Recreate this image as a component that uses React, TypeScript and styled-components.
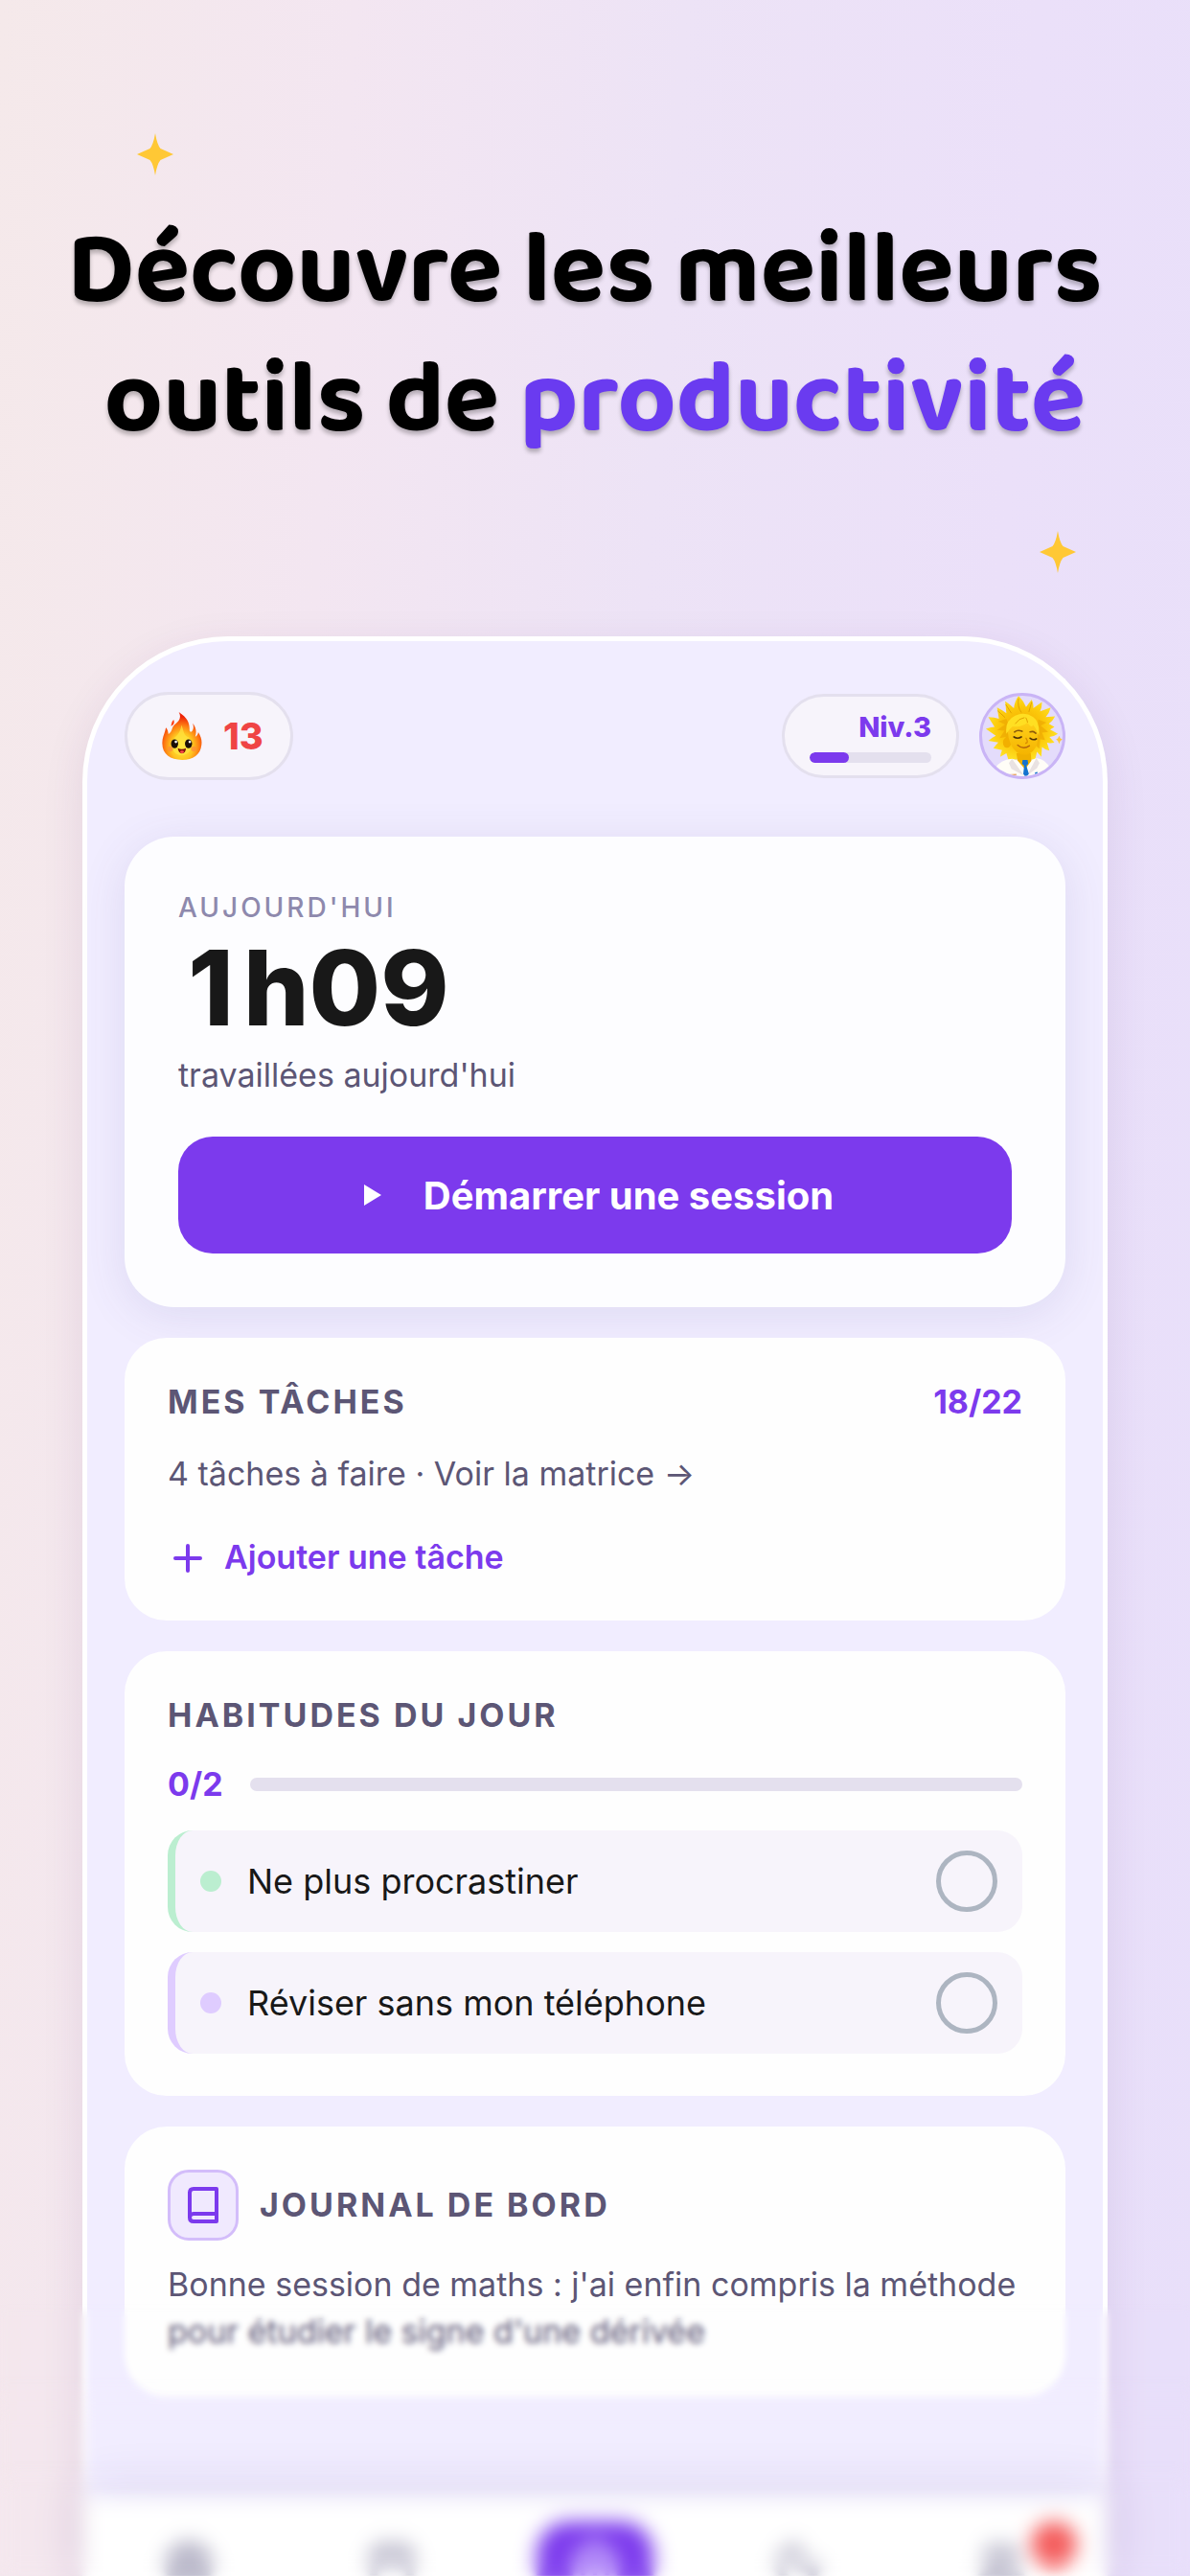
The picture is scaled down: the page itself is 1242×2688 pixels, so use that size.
import React from "react";
import styled, { createGlobalStyle, css } from "styled-components";
import { Calendar, House, Moon, Target, Users } from "lucide-react";

const color = {
  violet: "#7c3aed",
  ink: "#181818",
  text: "#5c5675",
  muted: "#8e89ad",
  track: "#e4e0ee",
  soft: "#f7f4fb",
  screen: "#f1edff",
  card: "#fefefe",
};

const GlobalStyle = createGlobalStyle`
  *, *::before, *::after { box-sizing: border-box; }
  body { margin: 0; }
  button, input { font: inherit; }
  h1, h2, p, ul { margin: 0; padding: 0; }
`;

const Page = styled.main`
  position: relative;
  display: flex;
  flex-direction: column;
  min-height: 100vh;
  overflow: hidden;
  font-family: Inter, "Liberation Sans", sans-serif;
  color: ${color.ink};
  background: linear-gradient(94deg, #f5e9ea 0%, #f3e6f1 26%, #ede3f6 50%, #ebe0f9 76%, #e8dffa 100%);
`;

const Hero = styled.header`
  display: flex;
  flex-direction: column;
  padding: 139px 119px 66px 143px;
`;

const Sparkle = styled.svg<{ $end?: boolean }>`
  width: 38px;
  height: 44px;
  fill: #ffc835;
  align-self: ${(p) => (p.$end ? "flex-end" : "flex-start")};
`;

const Headline = styled.h1`
  margin: 34px -119px 67px -143px;
  font-family: "Baloo 2", Lato, sans-serif;
  font-size: 106px;
  font-weight: 700;
  line-height: 135px;
  text-align: center;
  white-space: pre;
  color: #000;
  text-shadow: 0 4px 4px rgba(0, 0, 0, 0.25);
`;

const Accent = styled.span`
  color: #6a3bf0;
`;

const Phone = styled.section`
  flex: 1;
  display: flex;
  flex-direction: column;
  margin: 0 86px;
  border: 5px solid #fff;
  border-bottom: 0;
  border-radius: 152px 152px 0 0;
  background: ${color.screen};
  box-shadow: 0 12px 44px rgba(90, 40, 110, 0.1);
`;

const Screen = styled.div`
  display: flex;
  flex-direction: column;
  gap: 32px;
  padding: 53px 39px 106px;
`;

const TopBar = styled.div`
  display: flex;
  align-items: center;
  gap: 21px;
  margin-bottom: 27px;
`;

const pill = css`
  background: ${color.soft};
  border: 3px solid ${color.track};
  border-radius: 46px;
`;

const Streak = styled.div`
  ${pill}
  display: flex;
  align-items: center;
  gap: 22px;
  height: 92px;
  margin-right: auto;
  padding: 0 28px 0 36px;
  font-size: 38px;
  font-weight: 800;
  color: #ef4444;
`;

const Level = styled.div`
  ${pill}
  display: flex;
  flex-direction: column;
  justify-content: center;
  gap: 8px;
  width: 185px;
  height: 88px;
  padding: 0 26px;
  font-size: 29px;
  font-weight: 800;
  line-height: 36px;
  text-align: right;
  color: ${color.violet};
`;

const Track = styled.div<{ $size: number }>`
  flex: ${(p) => (p.$size > 12 ? "1" : "none")};
  height: ${(p) => p.$size}px;
  border-radius: 8px;
  background: ${color.track};
  overflow: hidden;
`;

const Fill = styled.div`
  height: 100%;
  border-radius: 8px;
  background: ${color.violet};
`;

const Avatar = styled.button`
  width: 90px;
  height: 90px;
  padding: 0;
  border: 3px solid #c9b4f6;
  border-radius: 50%;
  background: #e4dcfb;
  overflow: hidden;

  svg {
    display: block;
    width: 100%;
    height: 100%;
  }
`;

const Card = styled.section`
  padding: 45px 45px 44px;
  border-radius: 44px;
  background: ${color.card};
`;

const TodayCard = styled(Card)`
  display: flex;
  flex-direction: column;
  gap: 8px;
  padding: 56px;
  border-radius: 52px;
  background: #fdfdff;
  box-shadow: 0 8px 48px rgba(80, 70, 150, 0.12);
`;

const Eyebrow = styled.h2`
  font-size: 28px;
  font-weight: 500;
  line-height: 36px;
  letter-spacing: 3px;
  color: ${color.muted};
`;

const Total = styled.p`
  font-size: 108px;
  font-weight: 800;
  line-height: 116px;
`;

/* Gives the narrow "1" nearly the same advance as the other digits. */
const Digit = styled.span`
  display: inline-block;
  width: 68px;
  text-align: center;
`;

const Body = styled.p`
  font-size: 34px;
  line-height: 49px;
  color: ${color.text};
`;

const StartButton = styled.button`
  display: flex;
  align-items: center;
  justify-content: center;
  gap: 44px;
  height: 122px;
  margin-top: 32px;
  padding: 0 0 0 8px;
  border: 0;
  border-radius: 36px;
  background: ${color.violet};
  color: #fff;
  font-size: 40px;
  font-weight: 700;
`;

const Row = styled.div<{ $gap?: number }>`
  display: flex;
  align-items: center;
  gap: ${(p) => p.$gap ?? 0}px;
`;

const CardTitle = styled.h2`
  font-size: 34px;
  font-weight: 700;
  line-height: 44px;
  letter-spacing: 3px;
  color: ${color.text};
`;

const Count = styled.span`
  font-size: 34px;
  font-weight: 700;
  line-height: 44px;
  color: ${color.violet};
`;

const TaskTitleRow = styled(Row)`
  justify-content: space-between;
`;

const MatrixLink = styled.a`
  display: block;
  margin: 28px 0 41px;
  font-size: 34px;
  line-height: 49px;
  color: ${color.text};
  text-decoration: none;
`;

const AddButton = styled.button`
  display: flex;
  align-items: center;
  gap: 19px;
  padding: 0;
  border: 0;
  background: none;
  font-size: 34px;
  font-weight: 600;
  line-height: 44px;
  color: ${color.violet};
`;

const HabitProgress = styled(Row)`
  margin: 28px 0 26px;
`;

const HabitList = styled.ul`
  display: flex;
  flex-direction: column;
  gap: 21px;
  list-style: none;
`;

const HabitItem = styled.li<{ $tint: string }>`
  border-left: 8px solid ${(p) => p.$tint};
  border-radius: 26px;
  background: ${color.soft};

  label {
    display: flex;
    align-items: center;
    gap: 27px;
    height: 106px;
    padding: 0 26px;
    font-size: 36px;
  }

  label::before {
    content: "";
    width: 22px;
    height: 22px;
    border-radius: 50%;
    background: ${(p) => p.$tint};
  }
`;

const Check = styled.input`
  appearance: none;
  width: 64px;
  height: 64px;
  margin: 0 0 0 auto;
  border: 5px solid #adb5c1;
  border-radius: 50%;

  &:checked {
    background: ${color.violet};
    border-color: ${color.violet};
  }
`;

const JournalIcon = styled.span`
  display: grid;
  place-items: center;
  width: 74px;
  height: 74px;
  border: 3px solid #d3bdfa;
  border-radius: 22px;
  background: #f0e9fe;
`;

const JournalHead = styled(Row)`
  margin-bottom: 21px;
`;

const TabDock = styled.div`
  flex: 1;
  background: #fff;
  box-shadow: 0 -8px 56px rgba(70, 50, 120, 0.12);
`;

const TabBar = styled.nav`
  display: grid;
  grid-template-columns: repeat(5, 1fr);
  height: 80px;
  overflow: hidden;
`;

const Tab = styled.button<{ $active?: boolean }>`
  position: relative;
  justify-self: center;
  display: flex;
  justify-content: center;
  width: 122px;
  height: 112px;
  margin-top: 24px;
  padding: 20px 0 0;
  border: 0;
  border-radius: 34px;
  background: ${(p) => (p.$active ? color.violet : "transparent")};
  color: ${(p) => (p.$active ? "#d9c4ff" : "#b9b7c9")};
`;

const Badge = styled.span`
  position: absolute;
  top: 0;
  right: -18px;
  width: 48px;
  height: 48px;
  border-radius: 50%;
  background: #f45b5b;
`;

/* Soft-focus veil over the foot of the page; each layer starts lower and blurs more. */
const Veil = styled.div<{ $height: number; $blur: number; $fade: number }>`
  position: absolute;
  left: 0;
  right: 0;
  bottom: 0;
  height: ${(p) => p.$height}px;
  pointer-events: none;
  backdrop-filter: blur(${(p) => p.$blur}px);
  mask-image: linear-gradient(to bottom, transparent, #000 ${(p) => p.$fade}px);
`;

const StarIcon = ({ end }: { end?: boolean }) => (
  <Sparkle $end={end} viewBox="0 0 38 44" aria-hidden="true">
    <path d="M19 0Q21 12 24.500 16L38 22L24.500 28Q21 32 19 44Q17 32 13.500 28L0 22L13.500 16Q17 12 19 0Z" />
  </Sparkle>
);

const PlayIcon = () => (
  <svg width="18" height="24" viewBox="0 0 18 24" fill="#fff" aria-hidden="true">
    <path d="M0 1L18 12L0 23Z" />
  </svg>
);

const PlusIcon = () => (
  <svg width="40" height="40" viewBox="0 0 40 40" stroke={color.violet} strokeWidth="4" strokeLinecap="round" aria-hidden="true">
    <path d="M21 8V34M8 21H34" />
  </svg>
);

const FlameIcon = () => (
  <svg width="42" height="50" viewBox="0 0 124 148" aria-hidden="true">
    <defs>
      <radialGradient id="flame" cx="0.5" cy="0.72" r="0.62">
        <stop offset="0" stopColor="#ffe93c" />
        <stop offset="0.45" stopColor="#ffc41f" />
        <stop offset="0.72" stopColor="#fd7a12" />
        <stop offset="1" stopColor="#ee2408" />
      </radialGradient>
    </defs>
    <path
      fill="url(#flame)"
      d="M52 0C80 18 86 36 85 56C86 62 91 63 94 58C98 51 98 43 95 35C106 48 107 62 103 76C108 74 111 69 112 62C121 76 124 88 122 102C119 132 96 148 62 148C26 148 1 130 1 98C0 78 9 66 12 48C18 54 19 62 20 68C34 58 29 48 38 40C54 28 61 18 52 0Z"
    />
    <path fill="#ff3d12" d="M36 24C40 34 36 40 28 44C30 36 29 32 36 24Z" />
    <path fill="#ffe640" opacity="0.7" d="M60 40C68 58 66 72 82 78C98 92 96 130 62 134C28 132 24 98 40 78C50 70 58 58 60 40Z" />
    <ellipse cx="39" cy="98" rx="11" ry="14" fill="#1a0e08" />
    <ellipse cx="82" cy="98" rx="11" ry="14" fill="#1a0e08" />
    <circle cx="43" cy="92" r="4" fill="#fff" />
    <circle cx="86" cy="92" r="4" fill="#fff" />
    <circle cx="26" cy="114" r="8" fill="#ff8a3c" opacity="0.7" />
    <circle cx="98" cy="114" r="8" fill="#ff8a3c" opacity="0.7" />
    <path fill="#7a1208" d="M49 112Q61 118 74 112Q73 128 62 128Q51 128 49 112Z" />
    <ellipse cx="62" cy="123" rx="6" ry="4" fill="#ff4a4a" />
  </svg>
);

const AvatarArt = () => (
  <svg viewBox="6 6 258 258" aria-hidden="true">
    <defs>
      <radialGradient id="hair" cx="0.5" cy="0.5" r="0.55">
        <stop offset="0" stopColor="#f0a800" />
        <stop offset="0.6" stopColor="#fcc90b" />
        <stop offset="1" stopColor="#ffe52a" />
      </radialGradient>
      <linearGradient id="skin" x1="0" y1="0" x2="0" y2="1">
        <stop offset="0" stopColor="#ffd21c" />
        <stop offset="1" stopColor="#f5b400" />
      </linearGradient>
    </defs>
    <path
      fill="url(#hair)"
      d="M123 6Q140 24 147 42L165 18Q172 34 170 46L198 26Q198 44 192 56L226 44Q222 62 210 74L240 72Q232 88 220 96L238 106L224 114L249 128Q234 138 222 138L238 156Q222 160 214 156L222 182Q206 178 198 170L196 202L182 186L176 210L90 210L84 190L64 202Q66 188 70 180L42 174Q52 162 58 156L26 150Q40 138 50 134L18 112Q36 106 46 106L26 74Q46 74 60 80L54 44Q74 54 84 62L80 24Q98 36 108 46Q110 24 123 6Z"
    />
    <path fill="#e9a100" opacity="0.55" d="M84 80L58 88L80 98L54 116L78 118L62 142L82 138L78 170L94 160L92 100ZM186 82L212 92L194 102L218 122L198 124L208 148L192 146L190 176L180 168Z" />
    <path fill="#fffdf7" d="M48 238Q64 212 102 208L142 222L180 206Q212 210 224 240L218 270L52 270Z" />
    <path fill="#f0b000" d="M116 190L162 190L164 214L144 242L120 214Z" />
    <path fill="#e9e2e2" d="M102 208L140 262L100 240L92 222ZM180 206L150 262L182 238L190 222Z" />
    <path fill="#1573cf" d="M136 212L152 212L154 224L148 230L156 256L146 268L138 256L141 230L134 224Z" />
    <ellipse cx="86" cy="156" rx="13" ry="17" fill="#f2af00" />
    <path fill="url(#skin)" d="M88 120Q92 84 136 82Q182 84 184 122Q188 166 168 184Q146 204 118 188Q92 168 88 120Z" />
    <path fill="#ffdf22" d="M84 128Q78 86 112 70Q142 56 170 74Q192 90 188 134Q180 112 170 100Q164 112 152 92Q132 108 104 104Q94 112 84 128Z" />
    <path fill="none" stroke="#e0a000" strokeWidth="3" d="M112 96Q124 78 142 76M152 92Q150 82 146 76M123 14Q118 40 132 60M165 26L156 58M82 34L100 62M56 54L80 76" />
    <path fill="none" stroke="#8b5a0a" strokeWidth="5" strokeLinecap="round" d="M110 122Q120 114 134 120M160 122Q170 118 178 126" />
    <path fill="none" stroke="#4e3208" strokeWidth="5" strokeLinecap="round" d="M108 138Q120 146 132 138M160 142Q170 150 180 144" />
    <path fill="none" stroke="#d98c00" strokeWidth="4" strokeLinecap="round" d="M147 142Q156 156 146 158" />
    <path fill="none" stroke="#b5650c" strokeWidth="4" strokeLinecap="round" d="M120 164Q138 180 158 166" />
    <path fill="#ffc835" d="M253 134L257 143L264 146L257 150L253 160L249 150L243 146L249 143Z" />
    <path fill="#1573cf" d="M176 252L184 250L182 262L174 264ZM190 254L196 250L196 260L188 262Z" />
    <path fill="#e7a56a" d="M90 258L116 256L116 262L92 264Z" />
  </svg>
);

const JournalBook = () => (
  <svg width="34" height="40" viewBox="0 0 34 40" fill="none" stroke={color.violet} strokeWidth="4" aria-hidden="true">
    <path d="M31 3V37H7Q3 37 3 33V7Q3 3 7 3Z" strokeLinejoin="round" />
    <path d="M3 33Q3 29 7 29H31" />
  </svg>
);

const habits = [
  { id: "procrastination", name: "Ne plus procrastiner", tint: "#bbeed0" },
  { id: "telephone", name: "Réviser sans mon téléphone", tint: "#dfccff" },
];

const tabs = [
  { name: "Objectifs", Icon: Target },
  { name: "Calendrier", Icon: Calendar },
  { name: "Accueil", Icon: House, active: true },
  { name: "Repos", Icon: Moon },
  { name: "Amis", Icon: Users, badge: true },
];

export default function App() {
  const levelProgress = 32;

  return (
    <Page>
      <GlobalStyle />
      <Hero>
        <StarIcon />
        <Headline>
          {"Découvre les meilleurs \n"}
          {"outils de "}
          <Accent>productivité</Accent>
        </Headline>
        <StarIcon end />
      </Hero>

      <Phone>
        <Screen>
          <TopBar>
            <Streak>
              <FlameIcon />
              13
            </Streak>
            <Level>
              Niv.3
              <Track $size={11} role="progressbar" aria-label="Niveau" aria-valuenow={levelProgress}>
                <Fill style={{ width: `${levelProgress}%` }} />
              </Track>
            </Level>
            <Avatar aria-label="Profil">
              <AvatarArt />
            </Avatar>
          </TopBar>

          <TodayCard>
            <Eyebrow>AUJOURD'HUI</Eyebrow>
            <Total>
              <Digit>1</Digit>h09
            </Total>
            <Body>travaillées aujourd'hui</Body>
            <StartButton>
              <PlayIcon />
              Démarrer une session
            </StartButton>
          </TodayCard>

          <Card>
            <TaskTitleRow>
              <CardTitle>MES TÂCHES</CardTitle>
              <Count>18/22</Count>
            </TaskTitleRow>
            <MatrixLink href="#matrice">4 tâches à faire · Voir la matrice →</MatrixLink>
            <AddButton>
              <PlusIcon />
              Ajouter une tâche
            </AddButton>
          </Card>

          <Card>
            <CardTitle>HABITUDES DU JOUR</CardTitle>
            <HabitProgress $gap={28}>
              <Count>0/2</Count>
              <Track $size={14} role="progressbar" aria-label="Habitudes" aria-valuenow={0} />
            </HabitProgress>
            <HabitList>
              {habits.map((habit) => (
                <HabitItem key={habit.id} $tint={habit.tint}>
                  <label htmlFor={habit.id}>
                    {habit.name}
                    <Check type="checkbox" id={habit.id} />
                  </label>
                </HabitItem>
              ))}
            </HabitList>
          </Card>

          <Card>
            <JournalHead $gap={22}>
              <JournalIcon>
                <JournalBook />
              </JournalIcon>
              <CardTitle>JOURNAL DE BORD</CardTitle>
            </JournalHead>
            <Body>Bonne session de maths : j'ai enfin compris la méthode pour étudier le signe d'une dérivée</Body>
          </Card>
        </Screen>

        <TabDock>
          <TabBar>
            {tabs.map(({ name, Icon, active, badge }) => (
              <Tab key={name} $active={active} aria-label={name}>
                <Icon size={50} strokeWidth={4} />
                {badge && <Badge />}
              </Tab>
            ))}
          </TabBar>
        </TabDock>
      </Phone>

      <Veil $height={284} $blur={3} $fade={16} />
      <Veil $height={210} $blur={4} $fade={60} />
      <Veil $height={120} $blur={9} $fade={40} />
    </Page>
  );
}
